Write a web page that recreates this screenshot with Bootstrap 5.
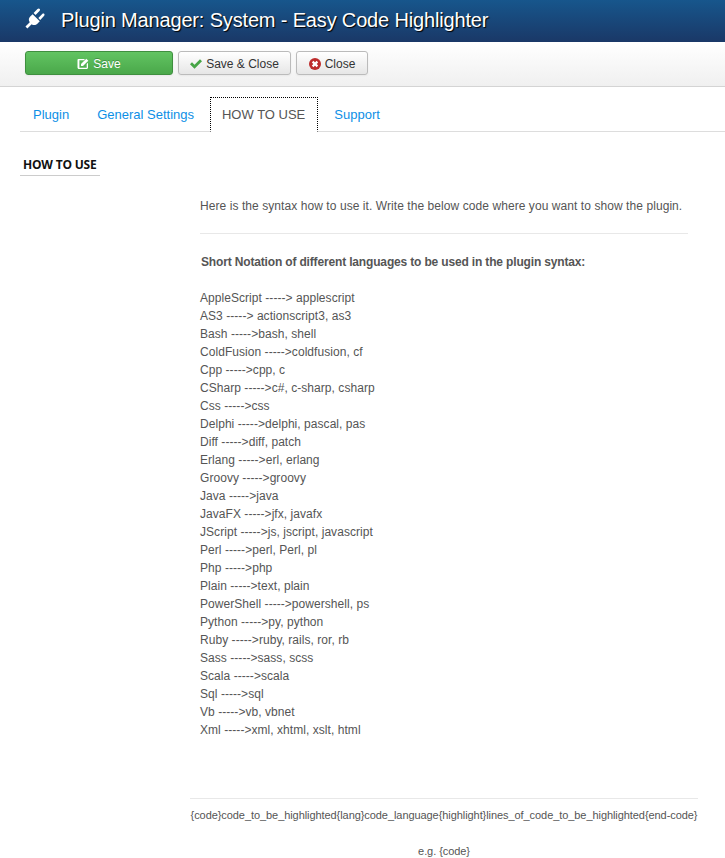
<!DOCTYPE html>
<html lang="en">
<head>
<meta charset="utf-8">
<title>Plugin Manager</title>
<link href="https://cdn.jsdelivr.net/npm/bootstrap@5.3.0/dist/css/bootstrap.min.css" rel="stylesheet">
<style>
body{font-family:"Liberation Sans",Arial,sans-serif;font-size:12px;line-height:18px;color:#555;background:#fff;overflow:hidden;height:858px}
.top-head{height:42px;background:linear-gradient(#17568c,#1a3867);padding-left:25px;gap:16px}
.top-head svg{margin-bottom:6px}
.top-head h1{margin:0 0 2px;font-family:"Liberation Sans",Arial,sans-serif;font-size:20px;line-height:40px;font-weight:400;letter-spacing:-.16px;color:#fff;text-shadow:1px 1px 1px #000;white-space:nowrap}
.tool-bar{height:45px;background:linear-gradient(#fff,#f0f0f0);border-bottom:1px solid #d4d4d4;padding:9px 0 0 25px;gap:5px}
.tb-btn{height:24px;font-size:12px;line-height:22px;padding:1px 0 0;border-radius:3px;color:#333;background:linear-gradient(#fff,#e6e6e6);border:1px solid #bbb;box-shadow:0 1px 2px rgba(0,0,0,.05);gap:4px}
.tb-save{width:148px;color:#fff;background:linear-gradient(#62c462,#4aa84a);border-color:#3f8f3f;text-shadow:0 -1px 0 rgba(0,0,0,.25)}
.tb-saveclose{width:113px}
.tb-close{width:72px}
.tab-row{margin:10px 0 0 20px;height:35px;border-bottom:1px solid #ddd;list-style:none;padding:0;gap:0}
.tab-row a{display:block;font-size:13px;line-height:20px;padding:8px 13px 6px;color:#0d8fe6;text-decoration:none;white-space:nowrap}
.tab-row .tab-gap{margin-right:2px}
.tab-row .tab-on{color:#555;background:#fff;border:1px dotted #000;border-bottom-color:#fff;height:35px;padding:7px 12px 7px 11px;margin:0 16px 0 1px}
.how-title{margin:24px 0 0 20px;width:80px;padding:0 0 1px 3px;border-bottom:1px solid #ccc;font-family:"Open Sans",sans-serif;font-size:12px;line-height:18px;font-weight:700;letter-spacing:-.2px;color:#111;white-space:nowrap}
.body-col{margin-left:200px;width:488px}
.intro-line{margin:21px 0 0;letter-spacing:.07px;white-space:nowrap}
.rule-a{margin:18px 0 0;border:0;border-top:1px solid #e8e8e8;opacity:1}
.notation{margin:19px 0 0 1px;font-weight:700;letter-spacing:-.16px;white-space:nowrap}
.lang-list{margin:18px 0 0;letter-spacing:.05px;white-space:nowrap}
.foot-col{margin:59px 0 0 190px;width:508px;font-size:11px;letter-spacing:-.07px;text-align:center;white-space:nowrap}
.rule-b{margin:0;border:0;border-top:1px solid #e8e8e8;opacity:1}
.foot-col p{margin:7px 0 0}
.foot-col p+p{margin-top:18px}
</style>
</head>
<body>
<header class="top-head d-flex align-items-center">
<svg width="20" height="21" viewBox="1.5 1 21 22" aria-hidden="true"><g fill="#fff"><path d="M2 20.5 L6.5 16 C4.8 13.5 5.5 11.5 7 10 L9.5 7.5 L17 15 L14.5 17.5 C13 19 10.5 19.5 8.5 18 L4 22.5 Z"/><path d="M10.5 6.2 L14.6 2 C15.4 1.2 16.6 1.3 17 2 C17.5 2.7 17.3 3.5 16.7 4.2 L12.6 8.3 Z"/><path d="M15.5 11.5 L19.6 7.3 C20.4 6.6 21.4 6.7 21.8 7.3 C22.2 8 22 8.9 21.4 9.5 L17.5 13.5 Z"/></g></svg>
<h1>Plugin Manager: System - Easy Code Highlighter</h1>
</header>
<div class="tool-bar d-flex align-items-start">
<button type="button" class="btn tb-btn tb-save d-flex align-items-center justify-content-center"><svg width="12" height="12" viewBox="0 0 12 12" aria-hidden="true"><path fill="#fff" d="M1.5 1H8L6.8 2.3H2.4V9.7H9.7V6L11 4.8V9.5C11 10.4 10.4 11 9.5 11H2C1.1 11 .5 10.4 .5 9.5V2C.5 1.4 1 1 1.5 1Z"/><path fill="#fff" d="M4 6L9.3.7 11.3 2.7 6 8H4Z"/></svg>Save</button>
<button type="button" class="btn tb-btn tb-saveclose d-flex align-items-center justify-content-center"><svg width="12" height="10" viewBox="0 0 12 10" aria-hidden="true"><path fill="#46a546" d="M0 5.3 2 3.3 4.5 5.8 10 .3 12 2.3 4.5 9.8Z"/></svg>Save &amp; Close</button>
<button type="button" class="btn tb-btn tb-close d-flex align-items-center justify-content-center"><svg width="12" height="12" viewBox="0 0 12 12" aria-hidden="true"><circle cx="6" cy="6" r="6" fill="#bd2c2c"/><path stroke="#fff" stroke-width="2.2" d="M3.6 3.6 8.4 8.4M8.4 3.6 3.6 8.4"/></svg>Close</button>
</div>
<ul class="tab-row d-flex">
<li><a href="#" class="tab-gap">Plugin</a></li>
<li><a href="#" class="tab-gap">General Settings</a></li>
<li><a href="#" class="tab-on">HOW TO USE</a></li>
<li><a href="#" class="px-0">Support</a></li>
</ul>
<div class="how-title">HOW TO USE</div>
<div class="body-col">
<p class="intro-line">Here is the syntax how to use it. Write the below code where you want to show the plugin.</p>
<hr class="rule-a">
<p class="notation">Short Notation of different languages to be used in the plugin syntax:</p>
<div class="lang-list">AppleScript -----&gt; applescript<br>AS3 -----&gt; actionscript3, as3<br>Bash -----&gt;bash, shell<br>ColdFusion -----&gt;coldfusion, cf<br>Cpp -----&gt;cpp, c<br>CSharp -----&gt;c#, c-sharp, csharp<br>Css -----&gt;css<br>Delphi -----&gt;delphi, pascal, pas<br>Diff -----&gt;diff, patch<br>Erlang -----&gt;erl, erlang<br>Groovy -----&gt;groovy<br>Java -----&gt;java<br>JavaFX -----&gt;jfx, javafx<br>JScript -----&gt;js, jscript, javascript<br>Perl -----&gt;perl, Perl, pl<br>Php -----&gt;php<br>Plain -----&gt;text, plain<br>PowerShell -----&gt;powershell, ps<br>Python -----&gt;py, python<br>Ruby -----&gt;ruby, rails, ror, rb<br>Sass -----&gt;sass, scss<br>Scala -----&gt;scala<br>Sql -----&gt;sql<br>Vb -----&gt;vb, vbnet<br>Xml -----&gt;xml, xhtml, xslt, html</div>
</div>
<div class="foot-col">
<hr class="rule-b">
<p>{code}code_to_be_highlighted{lang}code_language{highlight}lines_of_code_to_be_highlighted{end-code}</p>
<p>e.g. {code}</p>
</div>
</body>
</html>
